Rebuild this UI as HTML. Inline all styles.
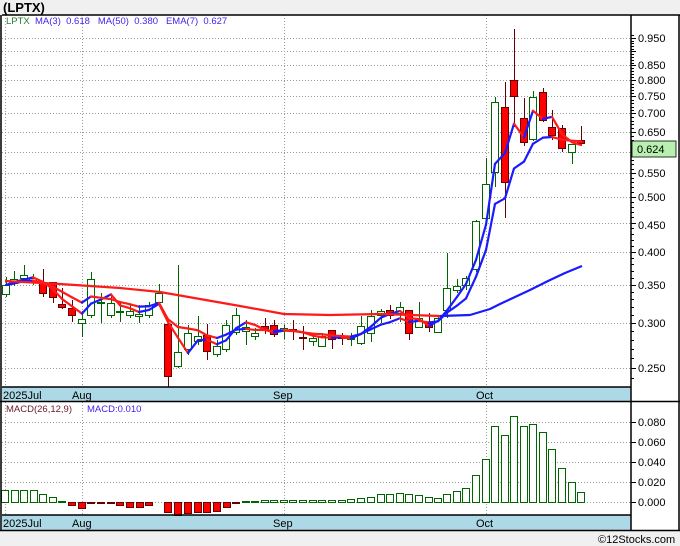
<!DOCTYPE html>
<html><head><meta charset="utf-8"><style>
html,body{margin:0;padding:0;background:#f0f0f0;width:680px;height:546px;overflow:hidden}
svg{display:block;font-family:"Liberation Sans",Tahoma,sans-serif}
</style></head><body>
<svg id="s" width="680" height="546" xmlns="http://www.w3.org/2000/svg">
<rect x="0" y="0" width="680" height="546" fill="#f0f0f0"/>
<text x="3" y="12" font-size="13" font-weight="bold" fill="#000">(LPTX)</text>
<rect x="2" y="15" width="677" height="515" fill="#fff"/>
<g id="grid" stroke="#999" stroke-width="1" stroke-dasharray="1,2"></g>
<rect x="2" y="387" width="629" height="14" fill="#add8e6"/>
<rect x="2" y="515" width="629" height="15" fill="#add8e6"/>
<g id="cand"></g>
<g id="lines" fill="none" stroke-width="2.2" stroke-linejoin="round"></g>
<g id="macd"></g>
<g stroke="#000" stroke-width="1.5" fill="none">
<line x1="2" y1="15" x2="680" y2="15"/>
<line x1="1" y1="15" x2="1" y2="530"/>
<line x1="631" y1="15" x2="631" y2="530"/>
<line x1="679" y1="15" x2="679" y2="530"/>
<line x1="2" y1="387" x2="631" y2="387"/>
<line x1="0" y1="401.5" x2="680" y2="401.5"/>
<line x1="2" y1="515" x2="631" y2="515"/>
<line x1="0" y1="530.5" x2="680" y2="530.5"/>
</g>
<g id="ticks" stroke="#000" stroke-width="1"></g>
<g font-size="11" fill="#000">
<text x="3" y="399">2025Jul</text><text x="72" y="399">Aug</text><text x="273" y="399">Sep</text><text x="476" y="399">Oct</text>
<text x="3" y="527">2025Jul</text><text x="72" y="527">Aug</text><text x="273" y="527">Sep</text><text x="476" y="527">Oct</text>
</g>
<g font-size="11" fill="#000">
<text x="638" y="42">0.950</text><text x="638" y="69">0.850</text><text x="638" y="84">0.800</text>
<text x="638" y="100">0.750</text><text x="638" y="117">0.700</text><text x="638" y="136">0.650</text>
<text x="638" y="177">0.550</text><text x="638" y="201">0.500</text><text x="638" y="229">0.450</text>
<text x="638" y="256">0.400</text><text x="638" y="289">0.350</text><text x="638" y="327">0.300</text>
<text x="638" y="372">0.250</text>
<text x="638" y="426">0.080</text><text x="638" y="446">0.060</text><text x="638" y="466">0.040</text>
<text x="638" y="486">0.020</text><text x="638" y="506">0.000</text>
</g>
<rect x="632" y="141" width="44" height="16" fill="#b8f0b0" stroke="#000" stroke-width="0.8"/>
<text x="637" y="153" font-size="11" fill="#000">0.624</text>
<g font-size="9.5">
<text x="6" y="24" fill="#2a7a2a">LPTX</text>
<text x="35" y="24" fill="#4422ee" xml:space="preserve">MA(3)  0.618   MA(50)  0.380   EMA(7)  0.627</text>
<text x="6" y="412" fill="#6a1a2a">MACD(26,12,9)</text>
<text x="87" y="412" fill="#4422ee">MACD:0.010</text>
</g>
<text x="598" y="543" font-size="11" fill="#000">©12Stocks.com</text>
</svg>
<script>
var NS="http://www.w3.org/2000/svg";
function el(p,t,a){var e=document.createElementNS(NS,t);for(var k in a)e.setAttribute(k,a[k]);document.getElementById(p).appendChild(e);return e;}
function Y(p){return 25.3-247.2*Math.log(p);}
function P(y){return Math.exp((25.3-y)/247.2);}
// grid
[0.95,0.9,0.85,0.8,0.75,0.7,0.65,0.6,0.55,0.5,0.45,0.4,0.35,0.3,0.25].forEach(function(p){var y=Math.round(Y(p))+0.5;el("grid","line",{x1:2,x2:631,y1:y,y2:y});el("ticks","line",{x1:631,x2:636,y1:y,y2:y});});
for(var p=0.24;p<0.97;p+=0.01){var y=Math.round(Y(p))+0.5;if(y>16&&y<386)el("ticks","line",{x1:631,x2:634,y1:y,y2:y});}
[422,442,462,482,502].forEach(function(y){el("grid","line",{x1:2,x2:631,y1:y+.5,y2:y+.5});el("ticks","line",{x1:631,x2:636,y1:y+.5,y2:y+.5});});
[5,82,284,486].forEach(function(x){el("grid","line",{x1:x+.5,x2:x+.5,y1:15,y2:387});el("grid","line",{x1:x+.5,x2:x+.5,y1:402,y2:515});});
// candles [x, openY, closeY, highY, lowY]
var C=[[6,294,285,277,297],[14,283,279,271,286],[24,278,275,265,283],[33,282,278,274,285],[43,282,293,269,297],[53,282,297,282,303],[62,304,307,288,309],[72,308,315,300,322],[82,323,319,311,337],[91,315,279,272,318],[101,303,302,293,323],[111,315,303,294,318],[120,312,311,302,322],[130,315,311,304,318],[139,316,314,305,323],[149,315,305,302,318],[159,302,293,284,305],[168,324,376,324,387],[178,366,352,265,368],[188,349,333,325,355],[198,341,336,316,345],[207,335,351,324,360],[217,354,346,340,357],[226,349,325,320,352],[236,332,315,308,335],[246,331,327,320,345],[255,336,333,328,340],[265,326,330,318,334],[274,325,334,320,337],[284,330,328,325,339],[293,329,331,320,340],[303,337,338,326,350],[313,341,338,333,346],[322,346,336,333,347],[332,330,339,330,349],[342,336,338,333,345],[351,339,338,333,346],[361,343,326,316,345],[371,333,316,310,342],[381,315,311,309,323],[390,310,315,305,319],[400,313,307,302,322],[409,310,333,310,340],[419,327,318,302,328],[429,323,327,313,332],[438,332,318,315,333],[447,310,288,253,318],[457,290,286,279,293],[466,285,278,276,290],[476,269,221,220,272],[486,218,184,158,222],[495,172,102,97,187],[505,107,182,82,218],[514,80,96,29,127],[524,118,142,98,146],[533,139,97,91,141],[543,92,120,88,122],[552,127,135,110,140],[562,128,148,125,152],[572,152,144,144,164],[581,140,143,126,146]];
C.forEach(function(c){var up=c[2]<=c[1];var top=Math.min(c[1],c[2]),bot=Math.max(c[1],c[2]);
el("cand","line",{x1:c[0]+.5,x2:c[0]+.5,y1:c[3],y2:c[4],stroke:up?"#006600":"#660000","stroke-width":1});
el("cand","rect",{x:c[0]-3.5,y:top+.5,width:7,height:Math.max(1,bot-top),fill:up?"#fff":"#ff0000",stroke:up?"#006600":"#660000","stroke-width":1});});
// MA lines
var cl=C.map(function(c){return P(c[2]);});
function seg(pts){for(var i=1;i<pts.length;i++){var a=pts[i-1],b=pts[i];el("lines","line",{x1:a[0],y1:a[1],x2:b[0],y2:b[1],stroke:b[1]<=a[1]?"#1a1aff":"#ff1a1a","stroke-width":2.2,"stroke-linecap":"round"});}}
var m3=[];for(var i=0;i<cl.length;i++){var s=0,n=0;for(var j=Math.max(0,i-2);j<=i;j++){s+=cl[j];n++;}m3.push([C[i][0],Y(s/n)]);}
var e=cl[0],e7=[];for(var i=0;i<cl.length;i++){e=i?e+(cl[i]-e)*0.25:cl[0];e7.push([C[i][0],Y(e)]);}
seg(m3);seg(e7);
el("lines","polyline",{points:"5,281 60,284 120,288 160,292 200,299 240,306 284,314 330,315 380,314 440,316",stroke:"#ff1a1a"});
el("lines","polyline",{points:"440,316 470,315 490,309 500,304 515,297 530,290 548,281 565,273 582,266",stroke:"#1a1aff"});
// MACD
var M=[[5,490],[15,490],[24,490],[34,490],[43,494],[53,497],[62,501],[72,505],[82,508],[91,503],[101,503],[111,503],[120,505],[130,507],[140,507],[149,505],[168,512],[178,515],[188,513],[198,512],[207,512],[217,511],[227,507],[236,502],[246,501],[255,501],[265,500],[274,500],[284,500],[293,500],[303,500],[313,500],[322,500],[332,500],[342,500],[351,499],[361,498],[371,497],[381,494],[390,494],[400,493],[409,494],[419,495],[429,497],[438,498],[447,494],[457,491],[466,488],[476,475],[486,459],[495,426],[505,435],[514,416],[524,426],[533,424],[543,432],[552,449],[562,468],[572,482],[581,492]];
M.forEach(function(m){var up=m[1]<502;var t=Math.min(m[1],502),h=Math.max(1,Math.abs(m[1]-502));
el("macd","rect",{x:m[0]-3.5,y:t+.5,width:7,height:h,fill:up?"#fff":"#ff0000",stroke:up?"#006600":"#660000","stroke-width":1});});
</script>
</body></html>
